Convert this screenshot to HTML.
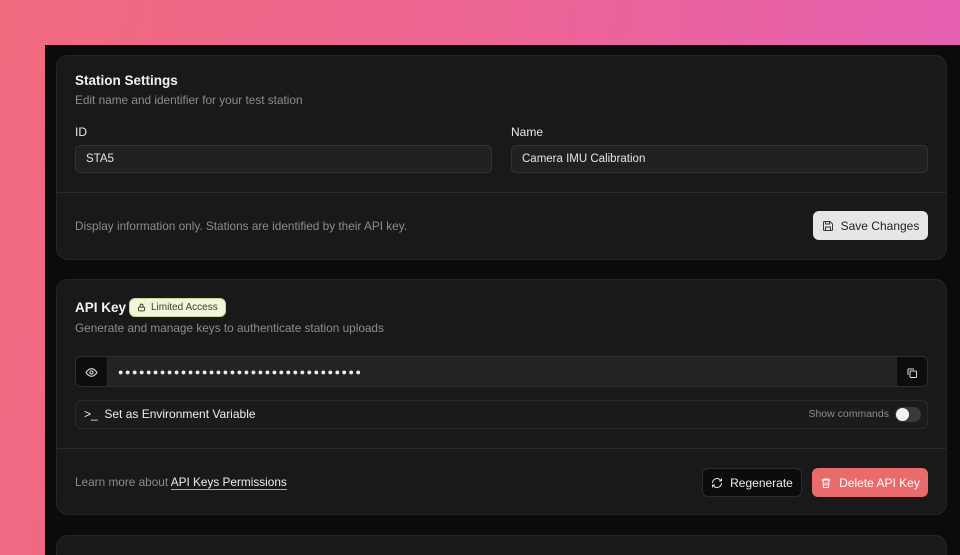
<!DOCTYPE html><html><head><style>
*{box-sizing:border-box;margin:0;padding:0}
html,body{width:960px;height:555px;overflow:hidden}
body{background:linear-gradient(100deg,#f26a7e 0%,#ec6596 50%,#e35fb6 100%);font-family:"Liberation Sans",sans-serif;position:relative;white-space:nowrap}
.panel{position:absolute;left:45px;top:45px;width:915px;height:510px;background:#0b0b0b}
.card{position:absolute;left:56px;width:891px;background:#191919;border:1px solid #262626;border-radius:12px}
.t{position:absolute;color:#f2f2f2;font-size:13.5px;font-weight:bold}
.s{position:absolute;color:#8d8d8d;font-size:11.8px}
.l{position:absolute;color:#e8e8e8;font-size:12px}
.in{position:absolute;height:28px;background:#212121;border:1px solid #333;border-radius:5px;color:#e4e4e4;font-size:11.5px;padding:7px 10px}
.hr{position:absolute;left:0;right:0;height:1px;background:#2a2a2a}
.btn{position:absolute;height:29px;border-radius:6px;font-size:12px;display:flex;align-items:center;justify-content:center;gap:7px;white-space:nowrap}
</style></head><body>
<div class="panel"></div>
<div class="card" style="top:55px;height:205px">
 <div class="t" style="left:18px;top:17px">Station Settings</div>
 <div class="s" style="left:18px;top:37px">Edit name and identifier for your test station</div>
 <div class="l" style="left:18px;top:69px">ID</div>
 <div class="l" style="left:454px;top:69px">Name</div>
 <div class="in" style="left:18px;top:89px;width:417px">STA5</div>
 <div class="in" style="left:454px;top:89px;width:417px">Camera IMU Calibration</div>
 <div class="hr" style="top:136px"></div>
 <div class="s" style="left:18px;top:163px">Display information only. Stations are identified by their API key.</div>
 <div class="btn" style="left:756px;top:155px;width:115px;background:#e6e6e6;color:#222"><svg width="12" height="12" viewBox="0 0 24 24" fill="none" stroke="#333" stroke-width="2"><path d="M5 3h11l5 5v11a2 2 0 0 1-2 2H5a2 2 0 0 1-2-2V5a2 2 0 0 1 2-2z"/><path d="M7 3v5h8V3M7 21v-7h10v7"/></svg>Save Changes</div>
</div>
<div class="card" style="top:279px;height:236px">
 <div class="t" style="left:18px;top:20px">API Key</div>
 <div style="position:absolute;left:72px;top:18px;height:19px;padding:0 7px;background:#f0f6d8;border:1px solid #c9d69a;border-radius:6px;font-size:10px;color:#3b4220;display:flex;align-items:center;gap:5px"><svg width="9" height="9" viewBox="0 0 24 24" fill="none" stroke="#3b4220" stroke-width="2.5"><rect x="4" y="11" width="16" height="10" rx="2"/><path d="M8 11V7a4 4 0 0 1 8 0v4"/></svg>Limited Access</div>
 <div class="s" style="left:18px;top:41px">Generate and manage keys to authenticate station uploads</div>
 <div style="position:absolute;left:18px;top:76px;width:853px;height:31px;border:1px solid #2e2e2e;border-radius:6px;background:#232323;overflow:hidden">
  <div style="position:absolute;left:0;top:0;width:32px;height:31px;background:#0d0d0d;border-right:1px solid #2e2e2e;display:flex;align-items:center;justify-content:center"><svg width="13" height="13" viewBox="0 0 24 24" fill="none" stroke="#ddd" stroke-width="2"><path d="M2 12s4-7 10-7 10 7 10 7-4 7-10 7S2 12 2 12z"/><circle cx="12" cy="12" r="3"/></svg></div>
  <div style="position:absolute;left:42px;top:8px;color:#eee;font-size:9px;line-height:14px;letter-spacing:1.55px">●●●●●●●●●●●●●●●●●●●●●●●●●●●●●●●●●●●</div>
  <div style="position:absolute;right:0;top:0;width:30px;height:31px;background:#0d0d0d;display:flex;align-items:center;justify-content:center"><svg width="12" height="12" viewBox="0 0 24 24" fill="none" stroke="#ddd" stroke-width="2"><rect x="8" y="8" width="13" height="13" rx="2"/><path d="M4 16V5a1 1 0 0 1 1-1h11"/></svg></div>
 </div>
 <div style="position:absolute;left:18px;top:120px;width:853px;height:29px;border:1px solid #2a2a2a;border-radius:6px;background:#1b1b1b">
  <div style="position:absolute;left:8px;top:6px;color:#eee;font-size:12px">&gt;_&nbsp; Set as Environment Variable</div>
  <div style="position:absolute;right:38px;top:7px;color:#8d8d8d;font-size:10.5px">Show commands</div>
  <div style="position:absolute;right:6px;top:6px;width:26px;height:15px;border-radius:8px;background:#3a3a3a"><div style="position:absolute;left:1px;top:1px;width:13px;height:13px;border-radius:50%;background:#f2f2f2"></div></div>
 </div>
 <div class="hr" style="top:168px"></div>
 <div class="s" style="left:18px;top:195px">Learn more about <span style="color:#eee;border-bottom:1px solid #aaa">API Keys Permissions</span></div>
 <div class="btn" style="left:645px;top:188px;width:100px;background:#0c0c0c;border:1px solid #2c2c2c;color:#eee"><svg width="12" height="12" viewBox="0 0 24 24" fill="none" stroke="#ddd" stroke-width="2"><path d="M21 12a9 9 0 0 1-15 6.7L3 16M3 12a9 9 0 0 1 15-6.7L21 8M21 3v5h-5M3 21v-5h5"/></svg>Regenerate</div>
 <div class="btn" style="left:755px;top:188px;width:116px;background:#ea6b6b;color:#fff"><svg width="12" height="12" viewBox="0 0 24 24" fill="none" stroke="#fff" stroke-width="2"><path d="M3 6h18M8 6V4h8v2M6 6l1 15h10l1-15M10 11v6M14 11v6"/></svg>Delete API Key</div>
</div>
<div class="card" style="top:535px;height:20px;border-bottom:none;border-radius:12px 12px 0 0"></div>
</body></html>
